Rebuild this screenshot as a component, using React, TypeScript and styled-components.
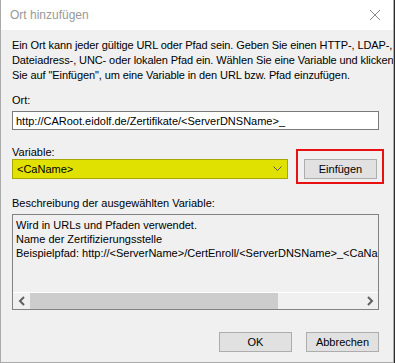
import React from "react";
import styled, { createGlobalStyle } from "styled-components";

const Global = createGlobalStyle`
  html, body { margin: 0; padding: 0; background: #2b2b2b; }
  body { font-family: "Liberation Sans", Arial, sans-serif; font-size: 11px; color: #000; }
  * { box-sizing: border-box; }
`;

const Window = styled.div`
  width: 394px;
  height: 363px;
  display: flex;
  flex-direction: column;
  background: #f0f0f0;
  border-left: 1px solid #aaaaaa;
  border-right: 1px solid #aaaaaa;
  border-bottom: 1px solid #aaaaaa;
  overflow: hidden;
`;

const TitleBar = styled.div`
  height: 30px;
  flex: none;
  background: #ffffff;
  display: flex;
  align-items: center;
  justify-content: space-between;
  padding: 0 12px 0 9px;
`;

const Title = styled.span`
  color: #999999;
  font-size: 12px;
`;

const Body = styled.div`
  flex: 1;
  display: flex;
  flex-direction: column;
  padding: 8px 14px 0 11px;
`;

const Intro = styled.p`
  margin: 0 -14px 0 0;
  line-height: 15px;
  white-space: nowrap;
  letter-spacing: -0.1px;
`;

const Label = styled.div<{ $top: number }>`
  margin-top: ${(p) => p.$top}px;
  line-height: 14px;
  height: 14px;
`;

const TextInput = styled.div`
  margin-top: 4px;
  height: 19px;
  background: #ffffff;
  border: 1px solid #7a7a7a;
  padding: 0 3px;
  display: flex;
  align-items: center;
  white-space: nowrap;
  overflow: hidden;
`;

const Row = styled.div`
  display: flex;
  align-items: center;
  gap: 16px;
`;

const Select = styled.div`
  width: 276px;
  height: 20px;
  background: #e1e100;
  border: 1px solid #a8a800;
  padding: 0 5px 0 4px;
  display: flex;
  align-items: center;
  justify-content: space-between;
`;

const Button = styled.div`
  width: 73px;
  height: 20px;
  background: #e1e1e1;
  border: 1px solid #adadad;
  display: flex;
  align-items: center;
  justify-content: center;
`;

const Highlight = styled.div`
  position: relative;
  &::after {
    content: "";
    position: absolute;
    top: -10px;
    bottom: -5px;
    left: -8px;
    right: -7px;
    border: 2px solid #e81010;
    pointer-events: none;
  }
`;

const DescBox = styled.div`
  margin-top: 4px;
  height: 96px;
  border: 1px solid #828282;
  background: #f0f0f0;
  display: flex;
  flex-direction: column;
`;

const DescText = styled.div`
  flex: 1;
  padding: 3px 0 0 3px;
  line-height: 14px;
  white-space: nowrap;
  overflow: hidden;
`;

const HScroll = styled.div`
  height: 17px;
  border-top: 1px solid #ffffff;
  display: flex;
  align-items: center;
`;

const ScrollArrow = styled.div`
  width: 17px;
  height: 16px;
  display: flex;
  align-items: center;
  justify-content: center;
  flex: none;
`;

const Track = styled.div`
  flex: 1;
  height: 16px;
  display: flex;
`;

const Thumb = styled.div`
  height: 16px;
  background: #cdcdcd;
`;

const Footer = styled.div`
  margin-top: 22px;
  display: flex;
  justify-content: flex-end;
  gap: 14px;
`;

const Chevron = ({ dir }: { dir: "left" | "right" }) => (
  <svg width="8" height="10" viewBox="0 0 8 10">
    <path
      d={dir === "left" ? "M6 1 L2 5 L6 9" : "M2 1 L6 5 L2 9"}
      fill="none"
      stroke="#606060"
      strokeWidth="2"
    />
  </svg>
);

export default function App() {
  return (
    <>
      <Global />
      <Window>
        <TitleBar>
          <Title>Ort hinzufügen</Title>
          <svg width="12" height="12" viewBox="0 0 12 12">
            <path d="M1 1 L11 11 M11 1 L1 11" stroke="#8a8a8a" strokeWidth="1" />
          </svg>
        </TitleBar>
        <Body>
          <Intro>
            Ein Ort kann jeder gültige URL oder Pfad sein. Geben Sie einen HTTP-, LDAP-,
            <br />
            Dateiadress-, UNC- oder lokalen Pfad ein. Wählen Sie eine Variable und klicken
            <br />
            Sie auf "Einfügen", um eine Variable in den URL bzw. Pfad einzufügen.
          </Intro>
          <Label $top={10}>Ort:</Label>
          <TextInput>http://CARoot.eidolf.de/Zertifikate/&lt;ServerDNSName&gt;_</TextInput>
          <Label $top={15}>Variable:</Label>
          <Row>
            <Select>
              <span>&lt;CaName&gt;</span>
              <svg width="9" height="6" viewBox="0 0 9 6">
                <path d="M0.5 0.5 L4.5 4.5 L8.5 0.5" fill="none" stroke="#555" strokeWidth="1" />
              </svg>
            </Select>
            <Highlight>
              <Button>Einfügen</Button>
            </Highlight>
          </Row>
          <Label $top={17}>Beschreibung der ausgewählten Variable:</Label>
          <DescBox>
            <DescText>
              Wird in URLs und Pfaden verwendet.
              <br />
              Name der Zertifizierungsstelle
              <br />
              Beispielpfad: http://&lt;ServerName&gt;/CertEnroll/&lt;ServerDNSName&gt;_&lt;CaName&gt;&lt;CRLNameSuffix&gt;
            </DescText>
            <HScroll>
              <ScrollArrow>
                <Chevron dir="left" />
              </ScrollArrow>
              <Track>
                <Thumb style={{ width: "248px" }} />
              </Track>
              <ScrollArrow>
                <Chevron dir="right" />
              </ScrollArrow>
            </HScroll>
          </DescBox>
          <Footer>
            <Button>OK</Button>
            <Button>Abbrechen</Button>
          </Footer>
        </Body>
      </Window>
    </>
  );
}
